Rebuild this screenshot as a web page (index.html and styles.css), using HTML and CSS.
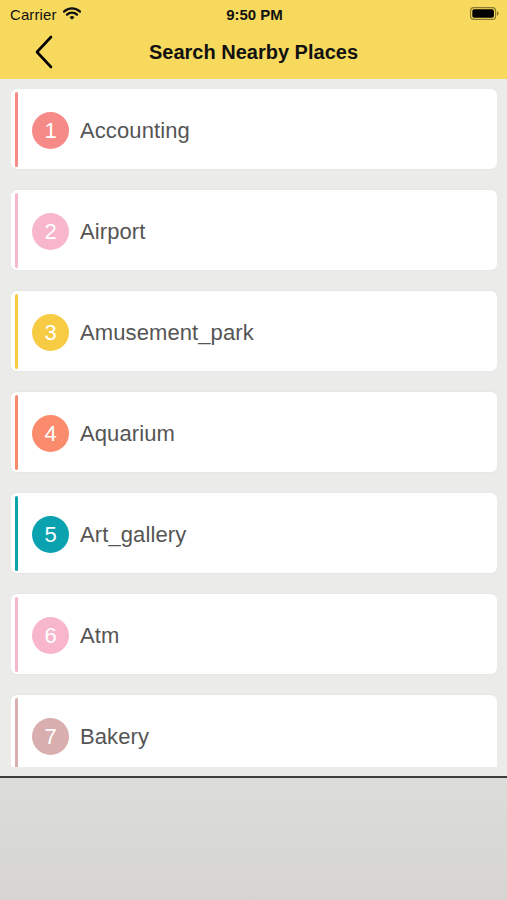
FILE: index.html
```html
<!DOCTYPE html>
<html>
<head>
<meta charset="utf-8">
<link rel="stylesheet" href="styles.css">
</head>
<body>
<div class="screen">
  <header class="top">
    <div class="status">
      <div class="status-left">
        <span class="carrier">Carrier</span>
        <svg class="wifi" width="18" height="13" viewBox="0 0 18 13">
          <path d="M1 4.6 A11.5 11.5 0 0 1 17 4.6" fill="none" stroke="#111" stroke-width="2.4" stroke-linecap="round"/>
          <path d="M4 7.6 A7.2 7.2 0 0 1 14 7.6" fill="none" stroke="#111" stroke-width="2.4" stroke-linecap="round"/>
          <path d="M6.6 10.3 L9 12.7 L11.4 10.3 A3.4 3.4 0 0 0 6.6 10.3 Z" fill="#111"/>
        </svg>
      </div>
      <span class="time">9:50 PM</span>
      <div class="status-right">
        <svg class="battery" width="29" height="13" viewBox="0 0 29 13">
          <rect x="0.6" y="0.6" width="25" height="11.8" rx="3.2" fill="none" stroke="#8a7a30" stroke-width="1.2"/>
          <rect x="2.3" y="2.3" width="21.6" height="8.4" rx="1.8" fill="#000"/>
          <path d="M27 4.3 Q28.6 4.6 28.6 6.5 Q28.6 8.4 27 8.7 Z" fill="#8a7a30"/>
        </svg>
      </div>
    </div>
    <div class="nav">
      <svg class="back" width="20" height="34" viewBox="0 0 20 34">
        <path d="M17 2 L3 17 L17 32" fill="none" stroke="#000" stroke-width="2.6" stroke-linecap="round" stroke-linejoin="round"/>
      </svg>
      <h1 class="title">Search Nearby Places</h1>
    </div>
  </header>
  <main class="content">
    <div class="list">
      <div class="card"><span class="bar c1"></span><span class="num c1">1</span><span class="label">Accounting</span></div>
      <div class="card"><span class="bar c2"></span><span class="num c2">2</span><span class="label">Airport</span></div>
      <div class="card"><span class="bar c3"></span><span class="num c3">3</span><span class="label">Amusement_park</span></div>
      <div class="card"><span class="bar c4"></span><span class="num c4">4</span><span class="label">Aquarium</span></div>
      <div class="card"><span class="bar c5"></span><span class="num c5">5</span><span class="label">Art_gallery</span></div>
      <div class="card"><span class="bar c6"></span><span class="num c6">6</span><span class="label">Atm</span></div>
      <div class="card"><span class="bar c7"></span><span class="num c7">7</span><span class="label">Bakery</span></div>
    </div>
  </main>
  <footer class="bottom"></footer>
</div>
</body>
</html>
```
FILE: styles.css
```css
html, body {
  margin: 0;
  padding: 0;
}
body {
  font-family: "Liberation Sans", Arial, sans-serif;
  background: #d8d7d3;
}
.screen {
  width: 507px;
  height: 900px;
  display: flex;
  flex-direction: column;
  overflow: hidden;
}
.top {
  background: #f7da5d;
  height: 79px;
  flex: none;
  display: flex;
  flex-direction: column;
}
.status {
  height: 28px;
  display: grid;
  grid-template-columns: 1fr auto 1fr;
  align-items: center;
  padding: 0 8px 0 10px;
  color: #111;
}
.status-left {
  display: flex;
  align-items: center;
  gap: 6px;
}
.carrier {
  font-size: 15px;
  letter-spacing: 0.1px;
}
.wifi {
  margin-top: -1px;
}
.time {
  font-size: 15px;
  font-weight: bold;
}
.status-right {
  display: flex;
  justify-content: flex-end;
}
.battery {
  margin-top: -1px;
}
.nav {
  flex: 1;
  position: relative;
  display: flex;
  align-items: center;
  justify-content: center;
}
.back {
  position: absolute;
  left: 34px;
  top: 7px;
}
.title {
  margin: 0;
  font-size: 20px;
  font-weight: bold;
  color: #111;
  margin-top: -2px;
}
.content {
  flex: none;
  height: 697px;
  background: #ebebe9;
  padding: 10px 10px 9px 11px;
  box-sizing: border-box;
}
.list {
  height: 100%;
  overflow: hidden;
  display: flex;
  flex-direction: column;
  gap: 21px;
}
.card {
  flex: none;
  height: 80px;
  background: #fff;
  border-radius: 6px;
  box-shadow: 0 0 3px rgba(0,0,0,0.05);
  display: flex;
  align-items: center;
  padding: 3px 0 2px 4px;
  box-sizing: border-box;
}
.bar {
  align-self: stretch;
  width: 3px;
  border-radius: 1.5px;
}
.num {
  width: 37px;
  height: 37px;
  border-radius: 50%;
  margin-left: 14px;
  color: #fff;
  font-size: 22px;
  display: flex;
  align-items: center;
  justify-content: center;
  margin-top: 2px;
}
.label {
  margin-left: 11px;
  margin-top: 3px;
  font-size: 22px;
  color: #555;
  letter-spacing: 0.1px;
}
.c1 { background: #f58a86; }
.c2 { background: #f7b6cc; }
.c3 { background: #f8cb45; }
.c4 { background: #fa8b6c; }
.c5 { background: #0ba2b0; }
.c6 { background: #f7b6cc; }
.c7 { background: #d8aeae; }
.bottom {
  flex: 1;
  border-top: 2px solid #3e3e3e;
  background: linear-gradient(#dcdcd8, #d6d5d1);
}
```
